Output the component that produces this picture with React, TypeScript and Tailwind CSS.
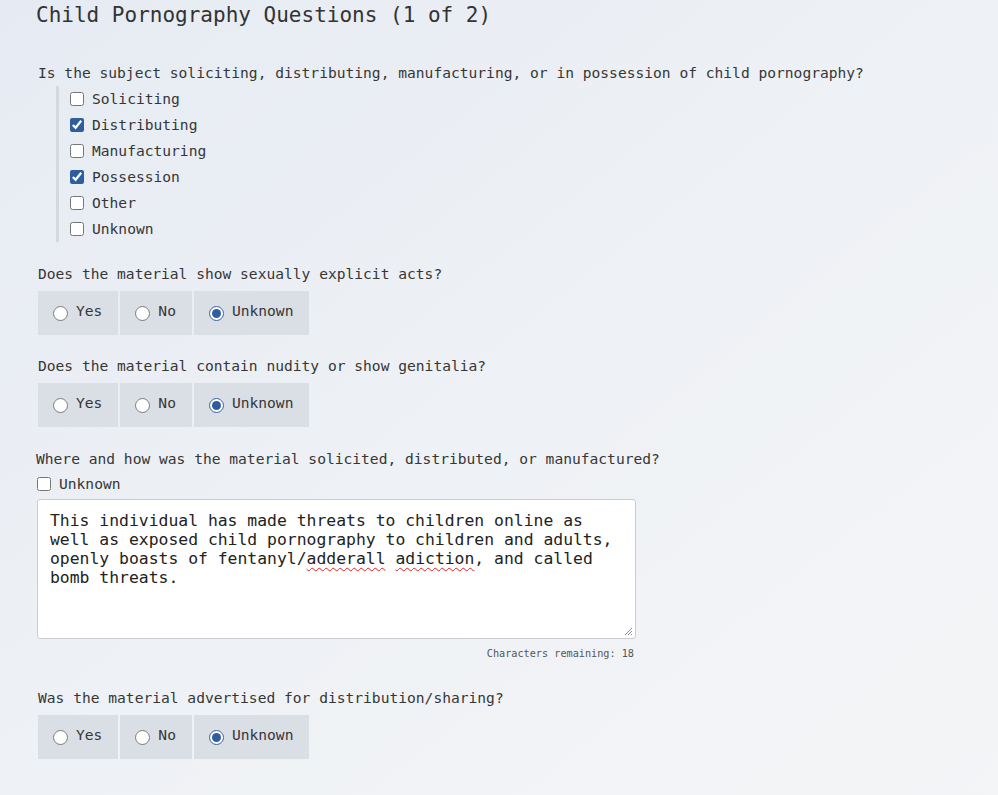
import React from "react";

const mono = { fontFamily: '"DejaVu Sans Mono", "Liberation Mono", monospace' };

function RadioGroup({ name }: { name: string }) {
  const opts = ["Yes", "No", "Unknown"];
  return (
    <div className="mt-[7px] flex gap-[2px]">
      {opts.map((o) => (
        <label
          key={o}
          className="flex h-[44px] items-center gap-[8px] bg-[#dadee5] pl-[15px] pr-[16px] text-[14.6px] text-[#363636]"
        >
          <input
            type="radio"
            name={name}
            defaultChecked={o === "Unknown"}
            className="m-0 h-[15px] w-[15px] accent-[#2f5e9e]"
          />
          <span className="relative top-[-2px]">{o}</span>
        </label>
      ))}
    </div>
  );
}

export default function App() {
  const boxes: [string, boolean][] = [
    ["Soliciting", false],
    ["Distributing", true],
    ["Manufacturing", false],
    ["Possession", true],
    ["Other", false],
    ["Unknown", false],
  ];
  return (
    <div
      style={mono}
      className="min-h-[795px] w-full bg-gradient-to-br from-[#e6ebf3] via-[#eef1f5] to-[#f4f5f7] text-[#363636]"
    >
      <div className="pl-[36px]">
        <div className="flex h-[30px] items-center pt-[2px] text-[21px] text-[#333]">
          Child Pornography Questions (1 of 2)
        </div>

        <div className="pl-[2px]">
          <div className="mt-[33px] flex h-[20px] items-center text-[14.6px]">
            Is the subject soliciting, distributing, manufacturing, or in possession of child pornography?
          </div>
          <div className="ml-[18px] mt-[3px] flex flex-col border-l-[3px] border-[#d5d9de] pl-[11px]">
            {boxes.map(([l, c]) => (
              <label key={l} className="flex h-[26px] items-center gap-[8px] text-[14.6px]">
                <input
                  type="checkbox"
                  defaultChecked={c}
                  className="m-0 h-[14px] w-[14px] accent-[#2f5e9e]"
                />
                <span>{l}</span>
              </label>
            ))}
          </div>

          <div className="mt-[22px] flex h-[20px] items-center text-[14.6px]">
            Does the material show sexually explicit acts?
          </div>
          <RadioGroup name="q2" />

          <div className="mt-[21px] flex h-[20px] items-center text-[14.6px]">
            Does the material contain nudity or show genitalia?
          </div>
          <RadioGroup name="q3" />
        </div>

        <div className="mt-[22px] flex h-[20px] items-center text-[14.6px]">
          Where and how was the material solicited, distributed, or manufactured?
        </div>
        <label className="mt-[5px] flex h-[20px] items-center gap-[8px] pl-[1px] text-[14.6px]">
          <input type="checkbox" className="m-0 h-[14px] w-[14px] accent-[#2f5e9e]" />
          <span>Unknown</span>
        </label>
        <div className="relative ml-[1px] mt-[5px] h-[140px] w-[599px] rounded-[3px] border border-[#c9cdd3] bg-white pl-[12px] pr-[12px] pt-[11px] text-[16.4px] leading-[19px] text-[#222]">
          <div>
            This individual has made threats to children online as
            <br />
            well as exposed child pornography to children and adults,
            <br />
            openly boasts of fentanyl/
            <span className="underline decoration-[#e02020] decoration-wavy decoration-1 underline-offset-[3px]">adderall</span>{" "}
            <span className="underline decoration-[#e02020] decoration-wavy decoration-1 underline-offset-[3px]">adiction</span>, and called
            <br />
            bomb threats.
          </div>
          <svg className="absolute bottom-[2px] right-[2px]" width="10" height="10" viewBox="0 0 10 10">
            <path d="M9 2 L2 9 M9 5 L5 9 M9 8 L8 9" stroke="#8a8a8a" strokeWidth="1" />
          </svg>
        </div>
        <div className="mt-[8px] flex h-[14px] w-[598px] items-center justify-end text-[10.2px] text-[#555]">
          Characters remaining: 18
        </div>

        <div className="pl-[2px]">
          <div className="mt-[27px] flex h-[20px] items-center text-[14.6px]">
            Was the material advertised for distribution/sharing?
          </div>
          <RadioGroup name="q5" />
        </div>
      </div>
    </div>
  );
}
